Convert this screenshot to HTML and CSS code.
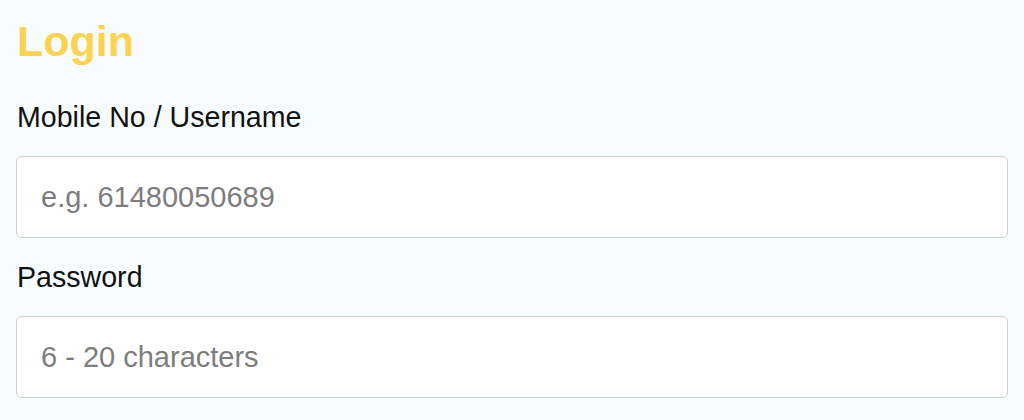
FILE: index.html
```html
<!DOCTYPE html>
<html lang="en">
<head>
<meta charset="utf-8">
<title>Login</title>
<link rel="stylesheet" href="styles.css">
</head>
<body>
<main class="login">
  <h1 class="login-title">Login</h1>
  <div class="field">
    <label class="field-label" for="user">Mobile No / Username</label>
    <input class="field-input" id="user" type="text" placeholder="e.g. 61480050689">
  </div>
  <div class="field">
    <label class="field-label" for="pass">Password</label>
    <input class="field-input" id="pass" type="password" placeholder="6 - 20 characters">
  </div>
</main>
</body>
</html>
```

FILE: styles.css
```css
html, body {
  margin: 0;
  padding: 0;
  background: #f7fdfe;
}

body {
  font-family: "Liberation Sans", Arial, Helvetica, sans-serif;
  color: #111;
}

.login {
  display: flex;
  flex-direction: column;
  padding: 17px 16px 0 16px;
}

.login-title {
  margin: 0 0 36px 1px;
  font-size: 43px;
  line-height: 48px;
  font-weight: 700;
  color: #fcd34e;
}

.field {
  display: flex;
  flex-direction: column;
  margin-bottom: 23px;
}

.field-label {
  font-size: 28.6px;
  line-height: 32px;
  margin: 0 0 23px 1px;
  color: #111;
}

.field-input {
  box-sizing: border-box;
  width: 100%;
  height: 82px;
  margin: 0;
  padding: 0 24px;
  border: 1px solid #cfcfcf;
  border-radius: 6px;
  background: #ffffff;
  font-family: "Liberation Sans", Arial, Helvetica, sans-serif;
  font-size: 29px;
  color: #222;
  outline: none;
}

.field-input::placeholder {
  color: #7d7d7d;
  opacity: 1;
}
```
